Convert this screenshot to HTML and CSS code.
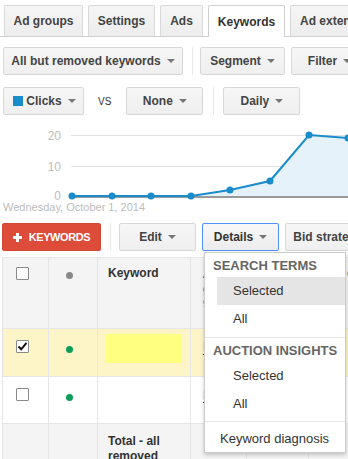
FILE: index.html
```html
<!DOCTYPE html>
<html>
<head>
<meta charset="utf-8">
<link rel="stylesheet" href="styles.css">
</head>
<body>
<div class="page">
  <div class="tabs">
    <div class="tab w79">Ad groups</div>
    <div class="tab w67">Settings</div>
    <div class="tab w43">Ads</div>
    <div class="tab w77 active">Keywords</div>
    <div class="tab w102">Ad extensions</div>
  </div>

  <div class="bar bar1">
    <div class="btn w180">All but removed keywords<span class="caret"></span></div>
    <div class="sep"></div>
    <div class="btn w85">Segment<span class="caret"></span></div>
    <div class="btn w77">Filter<span class="caret"></span></div>
  </div>

  <div class="bar bar2">
    <div class="btn w81"><span class="swatch"></span>Clicks<span class="caret"></span></div>
    <div class="vs">VS</div>
    <div class="btn w77">None<span class="caret"></span></div>
    <div class="sep"></div>
    <div class="btn w77">Daily<span class="caret"></span></div>
  </div>

  <svg class="chart" width="348" height="88" viewBox="0 0 348 88">
    <line x1="71" y1="20.5" x2="348" y2="20.5" stroke="#e0e0e0" stroke-width="1"/>
    <line x1="71" y1="51.5" x2="348" y2="51.5" stroke="#e0e0e0" stroke-width="1"/>
    <polygon points="72,81 112,81 151,81 191,81 230,75 270,66 309,20 348,23 348,81" fill="#e6f2f9"/>
    <line x1="71" y1="82" x2="348" y2="82" stroke="#9a9a9a" stroke-width="2"/>
    <polyline points="72,81 112,81 151,81 191,81 230,75 270,66 309,20 348,23" fill="none" stroke="#1a8ccc" stroke-width="2"/>
    <g fill="#1a8ccc">
      <circle cx="72" cy="81" r="3.5"/>
      <circle cx="112" cy="81" r="3.5"/>
      <circle cx="151" cy="81" r="3.5"/>
      <circle cx="191" cy="81" r="3.5"/>
      <circle cx="230" cy="75" r="3.5"/>
      <circle cx="270" cy="66" r="3.5"/>
      <circle cx="309" cy="20" r="3.5"/>
      <circle cx="348" cy="23" r="3.5"/>
    </g>
    <g class="axis-label" font-family="Liberation Sans, Arial, sans-serif" font-size="12" fill="#bdbdbd" text-anchor="end">
      <text x="61" y="24.5">20</text>
      <text x="61" y="55.5">10</text>
      <text x="61" y="85">0</text>
    </g>
  </svg>
  <div class="date">Wednesday, October 1, 2014</div>

  <div class="bar bar3">
    <div class="btn-red">
      <svg class="plus" width="9" height="9" viewBox="0 0 9 9"><rect x="3" y="0" width="3" height="9" fill="#fff"/><rect x="0" y="3" width="9" height="3" fill="#fff"/></svg>
      <span>KEYWORDS</span>
    </div>
    <div class="sep"></div>
    <div class="btn w77">Edit<span class="caret"></span></div>
    <div class="btn w77 focus">Details<span class="caret"></span></div>
    <div class="btn w100">Bid strategy<span class="caret"></span></div>
  </div>

  <table class="grid">
    <colgroup>
      <col class="c1"><col class="c2"><col class="c3"><col class="c4"><col class="c5"><col class="c6">
    </colgroup>
    <tr class="head">
      <td class="cbc"><span class="cb"></span></td>
      <td class="dotc"><span class="dot gray"></span></td>
      <td class="kw">Keyword</td>
      <td class="col4">Ad group<br>9</td>
      <td></td>
      <td class="col6">Clicks</td>
    </tr>
    <tr class="row sel">
      <td class="cbc"><span class="cb checked">
        <svg width="11" height="11" viewBox="0 0 11 11"><path d="M1.5 5.5 L4.2 8.3 L9.5 1.8" fill="none" stroke="#111" stroke-width="2"/></svg>
      </span></td>
      <td class="dotc"><span class="dot green"></span></td>
      <td class="kwc"><span class="hl"></span></td>
      <td class="col4"><span class="lnk">Eligible</span></td>
      <td></td>
      <td></td>
    </tr>
    <tr class="row plain">
      <td class="cbc"><span class="cb"></span></td>
      <td class="dotc"><span class="dot green"></span></td>
      <td class="kwc"></td>
      <td class="col4"><span class="lnk">Eligible</span></td>
      <td></td>
      <td></td>
    </tr>
    <tr class="total">
      <td></td>
      <td></td>
      <td class="tot">Total - all<br>removed</td>
      <td></td>
      <td></td>
      <td></td>
    </tr>
  </table>

  <div class="menu">
    <div class="menu-head">SEARCH TERMS</div>
    <div class="menu-item hover">Selected</div>
    <div class="menu-item">All</div>
    <div class="menu-sep"></div>
    <div class="menu-head">AUCTION INSIGHTS</div>
    <div class="menu-item">Selected</div>
    <div class="menu-item">All</div>
    <div class="menu-sep last"></div>
    <div class="menu-plain">Keyword diagnosis</div>
  </div>
</div>
</body>
</html>
```

FILE: styles.css
```css
* { box-sizing: border-box; }

html, body {
  margin: 0;
  padding: 0;
  background: #fff;
}

body {
  width: 348px;
  height: 459px;
  overflow: hidden;
  font-family: "Liberation Sans", Arial, sans-serif;
  color: #444;
}

.page {
  position: relative;
  width: 348px;
  height: 459px;
  overflow: hidden;
}

/* Tabs */
.tabs {
  display: flex;
  gap: 5px;
  padding: 5px 0 0 4px;
  height: 37px;
  border-bottom: 1px solid #cfcfcf;
  white-space: nowrap;
}

.tab {
  flex-shrink: 0;
  height: 31px;
  display: flex;
  align-items: center;
  justify-content: center;
  background: linear-gradient(#f5f5f5, #ededed);
  border: 1px solid #d9d9d9;
  border-bottom: none;
  border-radius: 2px 2px 0 0;
  font-size: 12px;
  font-weight: bold;
  color: #444;
}

.tab.active {
  background: #fff;
  border-color: #cfcfcf;
  height: 32px;
  margin-bottom: -1px;
  color: #333;
}

.w43 { width: 43px; }
.w67 { width: 67px; }
.w77 { width: 77px; }
.w79 { width: 79px; }
.w81 { width: 81px; }
.w85 { width: 85px; }
.w100 { width: 100px; }
.w102 { width: 102px; }
.w180 { width: 180px; }

/* toolbars */
.bar {
  display: flex;
  align-items: center;
  height: 28px;
  white-space: nowrap;
}

.bar1 { margin-top: 10px; padding-left: 3px; }
.bar1 .sep { margin: 0 7px 0 9px; }
.bar1 .w85 { margin-right: 6px; }

.bar2 { margin-top: 12px; padding-left: 3px; }
.bar2 .sep { margin: 0 9px 0 10px; }

.bar3 { margin-top: 9px; padding-left: 2px; }
.bar3 .sep { margin: 0 8px 0 9px; }
.bar3 .focus { margin: 0 6px; }

.btn {
  flex-shrink: 0;
  height: 28px;
  display: flex;
  align-items: center;
  justify-content: center;
  background: linear-gradient(#f6f6f6, #efefef);
  border: 1px solid #d8d8d8;
  border-radius: 2px;
  font-size: 12px;
  font-weight: bold;
  color: #444;
}

.btn.focus {
  border-color: #4d90fe;
  background: linear-gradient(#f8f8f8, #ececec);
  color: #333;
}

.caret {
  display: inline-block;
  width: 0;
  height: 0;
  margin-left: 6px;
  border-left: 4px solid transparent;
  border-right: 4px solid transparent;
  border-top: 4px solid #777;
}

.sep {
  flex-shrink: 0;
  width: 1px;
  height: 28px;
  background: #e8e8e8;
}

.swatch {
  display: inline-block;
  width: 10px;
  height: 10px;
  background: #1a8ccc;
  margin-right: 3px;
  margin-left: 2px;
}

.vs {
  flex-shrink: 0;
  font-size: 10px;
  color: #333;
  margin: 0 15px 0 14px;
  padding-top: 1px;
}

/* chart */
.chart {
  display: block;
}

.date {
  height: 13px;
  line-height: 13px;
  margin-top: -2px;
  padding-left: 3px;
  font-size: 11px;
  color: #bdbdbd;
}

.btn-red {
  flex-shrink: 0;
  width: 99px;
  height: 28px;
  display: flex;
  align-items: center;
  justify-content: center;
  gap: 7px;
  background: #dd4b39;
  border: 1px solid #d14836;
  border-radius: 2px;
  color: #fff;
  font-size: 11px;
  font-weight: bold;
  letter-spacing: -0.4px;
}

.plus { display: block; }

/* table */
.grid {
  margin-top: 6px;
  margin-left: 2px;
  border-collapse: collapse;
  table-layout: fixed;
  width: 366px;
  font-size: 12px;
}

.c1 { width: 46px; }
.c2 { width: 49px; }
.c3 { width: 93px; }
.c4 { width: 56px; }
.c5 { width: 62px; }
.c6 { width: 60px; }

.grid td {
  border: 1px solid #e6e6e6;
  vertical-align: top;
  padding: 0;
}

.head td {
  background: #f4f4f4;
  height: 71px;
  padding-top: 9px;
}

.row.sel td {
  background: #fdf5c7;
  height: 48px;
  padding-top: 11px;
}

.row.plain td {
  background: #fff;
  height: 47px;
  padding-top: 11px;
}

.total td {
  background: #f4f4f4;
  height: 50px;
  padding-top: 10px;
}

.cbc { padding-left: 13px !important; }

.cb {
  display: block;
  width: 13px;
  height: 13px;
  border: 1px solid #8a8a8a;
  background: #fff;
  border-radius: 1px;
}

.cb.checked svg { display: block; margin: 0; }

.dotc { padding-left: 17px !important; }

.dot {
  display: block;
  border-radius: 50%;
}

.dot.gray {
  width: 7px;
  height: 7px;
  background: #888;
  margin-top: 5px;
}

.dot.green {
  width: 7px;
  height: 7px;
  background: #0f9d58;
  margin-top: 6px;
}

.kw {
  font-weight: bold;
  color: #333;
  padding-left: 10px !important;
  padding-top: 8px !important;
  line-height: 14px;
}

.kwc { padding-left: 8px !important; }

.row.sel .kwc { padding-top: 5px !important; }

.hl {
  display: block;
  width: 75px;
  height: 29px;
  background: #ffff80;
}

.col4 {
  padding-left: 12px !important;
  color: #333;
  font-size: 12px;
  line-height: 15px;
}

.col6 {
  padding-left: 38px !important;
  color: #333;
}

.lnk {
  color: #2a2aa8;
  border-bottom: 1px dotted #2a2aa8;
}

.tot {
  font-weight: bold;
  color: #333;
  padding-left: 10px !important;
  line-height: 15px;
}

/* dropdown menu */
.menu {
  position: absolute;
  left: 204px;
  top: 252px;
  width: 142px;
  height: 201px;
  background: #fff;
  border: 1px solid rgba(0, 0, 0, 0.2);
  box-shadow: 0 2px 4px rgba(0, 0, 0, 0.2);
  white-space: nowrap;
}

.menu-head {
  height: 24px;
  padding-top: 2px;
  line-height: 22px;
  padding-left: 8px;
  font-size: 13px;
  font-weight: bold;
  color: #666;
}

.menu-item {
  height: 28px;
  line-height: 28px;
  margin-left: 12px;
  padding-left: 16px;
  font-size: 13px;
  color: #333;
}

.menu-item.hover {
  background: #e5e5e5;
}

.menu-sep {
  height: 1px;
  background: #e5e5e5;
  margin-top: 4px;
}

.menu-sep.last {
  margin-top: 3px;
}

.menu-plain {
  margin-top: 4px;
  height: 26px;
  line-height: 26px;
  padding-left: 15px;
  font-size: 13px;
  color: #333;
}
```
